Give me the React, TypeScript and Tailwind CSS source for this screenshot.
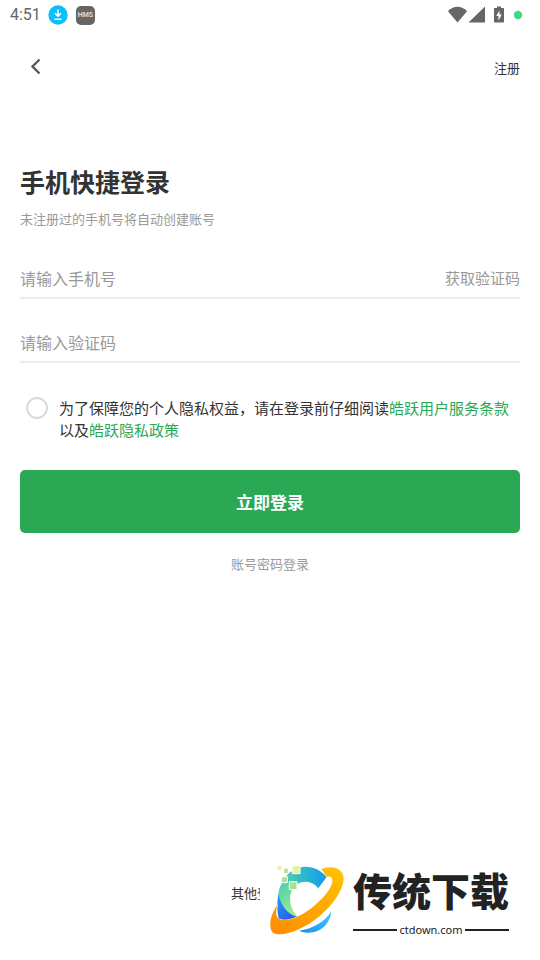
import { useState } from "react";

const FONT = "font-['Noto_Sans_CJK_SC',sans-serif]";

function StatusBar() {
  return (
    <div className="flex h-[30px] items-center justify-between pl-[10px] pr-4 text-[#666]">
      <div className="flex items-center">
        <span className="w-[38px] font-['Roboto',sans-serif] text-[16px] leading-5">4:51</span>
        <svg width="20" height="20" viewBox="0 0 20 20" aria-hidden="true">
          <circle cx="10" cy="10" r="9.7" fill="#0bbefc" />
          <path d="M10 4.500v6.500M7 8.200l3 3 3-3M6.300 14.200h7.400" fill="none" stroke="#fff" strokeWidth="1.600" />
        </svg>
        <span className="ml-2 flex h-[19px] w-[19px] items-center justify-center rounded-[5px] bg-[#666] font-['Roboto',sans-serif] text-[7px] font-bold leading-none text-[#ddd]">
          HMS
        </span>
      </div>
      <svg width="76" height="20" viewBox="0 0 76 20" aria-hidden="true">
        <path d="M0 6.200C5 .1 14 .1 19 6.200L9.500 17.500Z" fill="#666" />
        <path d="M37 1.500V17.500H20.500Z" fill="#666" />
        <path d="M46.500 3H49V1.500h4V3h2.500q.5 0 .5.500v13.300q0 .7-.7.700h-8.600q-.7 0-.7-.7V3.500q0-.5.500-.5Z" fill="#666" />
        <path d="M51.500 5.500L48.200 11H50.500V15.500L53.800 9.500H51.500Z" fill="#fff" />
        <circle cx="70" cy="10" r="4.200" fill="#3ddc84" />
      </svg>
    </div>
  );
}

function Logo() {
  return (
    <svg width="77" height="72" viewBox="144 24 231 216" aria-hidden="true">
      <defs>
        <linearGradient id="ring" x1="0" y1="1" x2="1" y2="0">
          <stop offset="0" stopColor="#ff8a00" />
          <stop offset="1" stopColor="#ffc400" />
        </linearGradient>
        <linearGradient id="arc" x1="0" y1="0" x2="1" y2="0">
          <stop offset="0" stopColor="#5fd3a8" />
          <stop offset="0.5" stopColor="#2bb9cf" />
          <stop offset="1" stopColor="#159be8" />
        </linearGradient>
        <linearGradient id="leaf" x1="0" y1="0" x2="0.5" y2="1">
          <stop offset="0" stopColor="#49cdb0" />
          <stop offset="1" stopColor="#9beb8e" />
        </linearGradient>
        <linearGradient id="base" x1="0" y1="0" x2="0.7" y2="1">
          <stop offset="0" stopColor="#2a9cf0" />
          <stop offset="1" stopColor="#2257f2" />
        </linearGradient>
        <linearGradient id="foot" x1="0" y1="1" x2="1" y2="0">
          <stop offset="0" stopColor="#1c8eee" />
          <stop offset="1" stopColor="#42ccff" />
        </linearGradient>
      </defs>
      <path d="M187 82C212 28 280 18 320 66L295 100C274 72 232 72 213 110L180 112Z" fill="url(#arc)" />
      <path d="M188 80C172 105 170 135 184 160C196 182 214 191 236 188C212 166 205 137 214 108L216 96Z" fill="url(#leaf)" />
      <path d="M175 116C170 150 171 180 180 200C197 208 216 202 238 187C209 182 185 160 175 116Z" fill="url(#base)" />
      <path d="M237 227C275 223 318 199 334 168C330 218 284 246 237 227Z" fill="url(#foot)" />
      <path
        d="M303 43C330 31 360 36 369 59C379 92 343 147 299 183C249 226 186 247 160 234C143 219 151 178 172 150C166 174 167 187 180 194C207 202 250 181 288 148C327 114 345 82 334 67C330 63 325 64 320 66C315 57 310 49 303 43Z"
        fill="url(#ring)"
        stroke="#fff"
        strokeWidth="3"
        paintOrder="stroke"
      />
      <g stroke="#fff" strokeWidth="3">
        <path d="M217 32h23v24h-23Z" fill="#e4f397" />
        <path d="M184 65h18v18h-18Z" fill="#a4e49a" />
        <path d="M208 80h23v24h-23Z" fill="#a5e68d" />
      </g>
      <path d="M173 33h11v12h-11Z" fill="#e5f3a1" />
      <path d="M192 41h12v13h-12Z" fill="#b8e69d" />
    </svg>
  );
}

function Watermark() {
  return (
    <div className="absolute bottom-0 right-0 flex h-[110px] w-[280px] items-start bg-white pl-2 pt-[13px]">
      <Logo />
      <div className="ml-2 w-[156px] text-[#222]">
        <p className="whitespace-nowrap text-[39px] font-black leading-[52px]">传统下载</p>
        <div className="mt-[6px] flex items-center gap-[2px]">
          <span className="h-[2px] flex-1 bg-[#222]" />
          <span className="font-['Noto_Sans',sans-serif] text-[11px] leading-[18px]">ctdown.com</span>
          <span className="h-[2px] flex-1 bg-[#222]" />
        </div>
      </div>
    </div>
  );
}

export default function App() {
  const [phone, setPhone] = useState("");
  const [code, setCode] = useState("");
  const [agreed, setAgreed] = useState(false);

  return (
    <div className={`flex min-h-screen flex-col bg-white text-[#333] ${FONT}`}>
      <StatusBar />

      <header className="flex h-[76px] items-center justify-between px-5">
        <button type="button" aria-label="返回" className="pl-[9px]">
          <svg width="12" height="20" viewBox="0 0 12 20" aria-hidden="true">
            <path d="M10.500 1.500L3.500 8.500l7 7" fill="none" stroke="#595959" strokeWidth="2.400" />
          </svg>
        </button>
        <a href="#register" className="text-[13px] leading-5">注册</a>
      </header>

      <main className="px-5 pt-[59px]">
        <h1 className="text-[25px] font-bold leading-8">手机快捷登录</h1>
        <p className="mt-3 text-[13px] leading-5 text-[#999]">未注册过的手机号将自动创建账号</p>

        <form onSubmit={(e) => e.preventDefault()}>
          <div className="mt-8 flex h-[38px] items-center border-b-2 border-[#ececec] pb-[2px]">
            <input
              type="tel"
              aria-label="手机号"
              placeholder="请输入手机号"
              value={phone}
              onChange={(e) => setPhone(e.target.value)}
              className="min-w-0 flex-1 text-[16px] leading-6 outline-none placeholder:text-[#999]"
            />
            <button type="button" className="text-[15px] leading-6 text-[#999]">获取验证码</button>
          </div>
          <div className="mt-[26px] flex h-[38px] items-center border-b-2 border-[#ececec] pb-[2px]">
            <input
              type="text"
              aria-label="验证码"
              placeholder="请输入验证码"
              value={code}
              onChange={(e) => setCode(e.target.value)}
              className="min-w-0 flex-1 text-[16px] leading-6 outline-none placeholder:text-[#999]"
            />
          </div>

          <div className="mt-[34px] flex items-start pl-[6px]">
            <input
              id="agree"
              type="checkbox"
              checked={agreed}
              onChange={(e) => setAgreed(e.target.checked)}
              className="h-[22px] w-[22px] shrink-0 appearance-none rounded-full border-2 border-[#dadada] checked:border-[#2aa854] checked:bg-[#2aa854]"
            />
            <label htmlFor="agree" className="ml-[11px] text-[15px] leading-[22px]">
              为了保障您的个人隐私权益，请在登录前仔细阅读
              <a href="#terms" className="text-[#2aa854]">皓跃用户服务条款</a>
              以及
              <a href="#privacy" className="text-[#2aa854]">皓跃隐私政策</a>
            </label>
          </div>

          <button type="submit" className="mt-[29px] h-[63px] w-full rounded-[5px] bg-[#2aa854] text-[17px] font-bold text-white">
            立即登录
          </button>
        </form>

        <div className="mt-[21px] text-center text-[13px] leading-5 text-[#999]">
          <a href="#password">账号密码登录</a>
        </div>
      </main>

      <footer className="relative mt-auto flex h-[110px] justify-center pt-[33px]">
        <p className="w-[78px] text-[13px] leading-5">其他登</p>
        <Watermark />
      </footer>
    </div>
  );
}
